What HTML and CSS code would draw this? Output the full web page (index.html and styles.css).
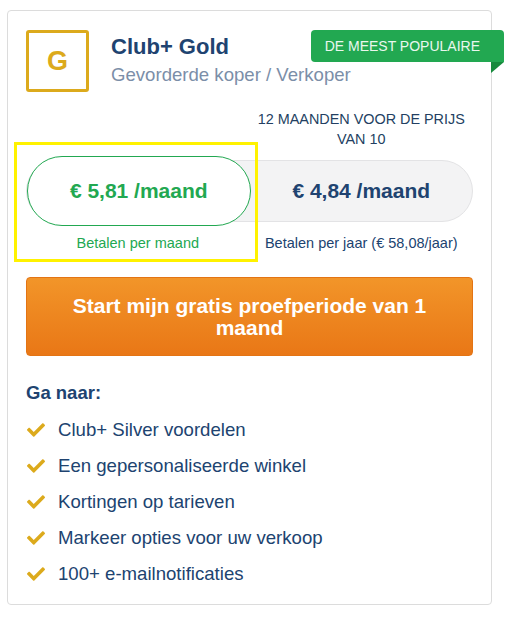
FILE: index.html
```html
<!DOCTYPE html>
<html lang="nl">
<head>
  <meta charset="UTF-8" />
  <meta name="viewport" content="width=device-width, initial-scale=1.0"/>
  <title>Club+ Gold</title>
  <link rel="stylesheet" href="styles.css">
</head>
<body>
  <div class="card">
    <div class="badge">DE MEEST POPULAIRE</div>

    <div class="header">
      <div class="logo">G</div>
      <div class="titles">
        <h2>Club+ Gold</h2>
        <p class="subtitle">Gevorderde koper / Verkoper</p>
      </div>
    </div>

    <div class="pricing">
      <div></div>
      <div class="note">12 MAANDEN VOOR DE PRIJS VAN 10</div>

      <div class="toggle">
        <div class="option active">€ 5,81 /maand</div>
        <div class="option">€ 4,84 /maand</div>
      </div>

      <div class="label active">Betalen per maand</div>
      <div class="label">Betalen per jaar (€ 58,08/jaar)</div>

      <div class="highlight"></div>
    </div>

    <button class="cta">Start mijn gratis proefperiode van 1 maand</button>

    <h3>Ga naar:</h3>
    <ul class="perks">
      <li><svg class="check" viewBox="0 60 512 392"><path d="M173.9 439.4l-166.4-166.4c-10-10-10-26.2 0-36.2l36.2-36.2c10-10 26.2-10 36.2 0L192 312.7 432.1 72.6c10-10 26.2-10 36.2 0l36.2 36.2c10 10 10 26.2 0 36.2l-294.4 294.4c-10 10-26.2 10-36.2 0z"/></svg>Club+ Silver voordelen</li>
      <li><svg class="check" viewBox="0 60 512 392"><path d="M173.9 439.4l-166.4-166.4c-10-10-10-26.2 0-36.2l36.2-36.2c10-10 26.2-10 36.2 0L192 312.7 432.1 72.6c10-10 26.2-10 36.2 0l36.2 36.2c10 10 10 26.2 0 36.2l-294.4 294.4c-10 10-26.2 10-36.2 0z"/></svg>Een gepersonaliseerde winkel</li>
      <li><svg class="check" viewBox="0 60 512 392"><path d="M173.9 439.4l-166.4-166.4c-10-10-10-26.2 0-36.2l36.2-36.2c10-10 26.2-10 36.2 0L192 312.7 432.1 72.6c10-10 26.2-10 36.2 0l36.2 36.2c10 10 10 26.2 0 36.2l-294.4 294.4c-10 10-26.2 10-36.2 0z"/></svg>Kortingen op tarieven</li>
      <li><svg class="check" viewBox="0 60 512 392"><path d="M173.9 439.4l-166.4-166.4c-10-10-10-26.2 0-36.2l36.2-36.2c10-10 26.2-10 36.2 0L192 312.7 432.1 72.6c10-10 26.2-10 36.2 0l36.2 36.2c10 10 10 26.2 0 36.2l-294.4 294.4c-10 10-26.2 10-36.2 0z"/></svg>Markeer opties voor uw verkoop</li>
      <li><svg class="check" viewBox="0 60 512 392"><path d="M173.9 439.4l-166.4-166.4c-10-10-10-26.2 0-36.2l36.2-36.2c10-10 26.2-10 36.2 0L192 312.7 432.1 72.6c10-10 26.2-10 36.2 0l36.2 36.2c10 10 10 26.2 0 36.2l-294.4 294.4c-10 10-26.2 10-36.2 0z"/></svg>100+ e-mailnotificaties</li>
    </ul>
  </div>
</body>
</html>
```

FILE: styles.css
```css
:root {
  --navy: #204370;
  --green: #22a851;
  --gold: #dcaa1c;
  --border: #dcdcdc;
}

body {
  margin: 0;
  background: #ffffff;
  font-family: "Liberation Sans", Arial, sans-serif;
  color: var(--navy);
}

.card {
  position: relative;
  box-sizing: border-box;
  width: 485px;
  margin: 10px 0 0 7px;
  padding: 19px 18px 12px;
  border: 1px solid var(--border);
  border-radius: 4px;
  background: #ffffff;
}

/* Ribbon badge sticking out on the right */
.badge {
  position: absolute;
  top: 19px;
  right: -13px;
  height: 32px;
  line-height: 32px;
  padding: 0 24px 0 14px;
  background: var(--green);
  color: #eaf7ee;
  font-size: 14px;
  border-radius: 4px 4px 0 4px;
}

.badge::after {
  content: "";
  position: absolute;
  top: 100%;
  right: 0;
  width: 13px;
  height: 11px;
  background: #178a3c;
  clip-path: polygon(0 0, 100% 0, 0 100%);
}

.header {
  display: flex;
  gap: 22px;
}

.logo {
  box-sizing: border-box;
  width: 63px;
  height: 62px;
  border: 3px solid var(--gold);
  border-radius: 3px;
  display: flex;
  align-items: center;
  justify-content: center;
  color: var(--gold);
  font-size: 27px;
  font-weight: bold;
}

.titles {
  padding-top: 4px;
}

.titles h2 {
  margin: 0;
  font-size: 22px;
  line-height: 26px;
  color: var(--navy);
}

.subtitle {
  margin: 4px 0 0;
  font-size: 18.6px;
  line-height: 22px;
  color: #7b8ea8;
}

/* Monthly / yearly switch */
.pricing {
  position: relative;
  display: grid;
  grid-template-columns: 1fr 1fr;
  margin-top: 17px;
}

.note {
  text-align: center;
  font-size: 14.4px;
  line-height: 20px;
  color: #233f62;
}

.toggle {
  grid-column: 1 / 3;
  display: flex;
  height: 62px;
  box-sizing: border-box;
  margin-top: 11px;
  background: #f3f3f4;
  border: 1px solid #e3e3e5;
  border-radius: 31px;
}

.option {
  flex: 1;
  display: flex;
  align-items: center;
  justify-content: center;
  font-size: 21px;
  font-weight: bold;
  color: var(--navy);
}

.option.active {
  margin: -5px 0;
  background: #ffffff;
  border: 1px solid var(--green);
  border-radius: 35px;
  color: var(--green);
}

.label {
  margin-top: 11px;
  text-align: center;
  font-size: 14.5px;
  line-height: 20px;
  color: var(--navy);
}

.label.active {
  color: var(--green);
}

.highlight {
  position: absolute;
  left: -12px;
  top: 33px;
  width: 244px;
  height: 120px;
  box-sizing: border-box;
  border: 3px solid #fff200;
  pointer-events: none;
}

.cta {
  display: block;
  width: 100%;
  margin-top: 24px;
  padding: 17px 36px 16px;
  border: 1px solid #e37414;
  border-radius: 4px;
  background: linear-gradient(#f29529, #e97716);
  color: #ffffff;
  font-family: inherit;
  font-size: 21px;
  font-weight: bold;
  line-height: 22px;
  cursor: pointer;
}

h3 {
  margin: 26px 0 0;
  font-size: 18.5px;
  line-height: 22px;
  color: var(--navy);
}

.perks {
  list-style: none;
  margin: 8px 0 0;
  padding: 0;
}

.perks li {
  display: flex;
  align-items: center;
  gap: 13px;
  height: 36px;
  font-size: 18.6px;
  color: var(--navy);
}

.check {
  width: 18px;
  height: 14px;
  margin-left: 1px;
  fill: var(--gold);
  flex-shrink: 0;
}
```
